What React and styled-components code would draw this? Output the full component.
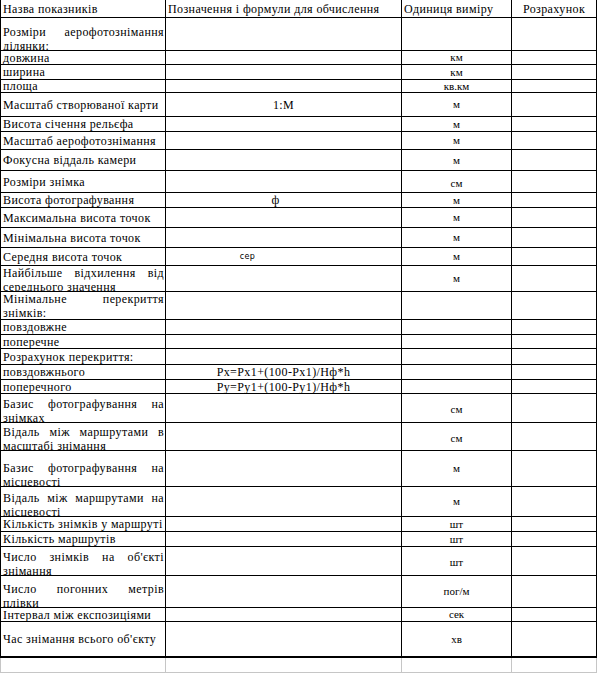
import React from 'react';
import styled, { createGlobalStyle } from 'styled-components';

const GlobalStyle = createGlobalStyle`
  html, body {
    margin: 0;
    padding: 0;
    background: #fff;
  }
  body {
    font-family: "Liberation Serif", "Times New Roman", serif;
    color: #000;
  }
`;

const Sheet = styled.div`
  width: 597px;
  display: flex;
  flex-direction: column;
`;

const Row = styled.div`
  display: grid;
  grid-template-columns: 166px 236px 110px 85px;
  box-sizing: border-box;
  height: ${p => p.$h}px;
  border-bottom: ${p => (p.$thick ? 2 : 1)}px solid ${p => (p.$grey ? '#c6c6c6' : '#000')};
`;

const Cell = styled.div`
  box-sizing: border-box;
  display: flex;
  flex-direction: column;
  justify-content: ${p => p.$valign || 'center'};
  overflow: hidden;
  white-space: nowrap;
  border-right: 1px solid ${p => (p.$grey ? '#c6c6c6' : '#000')};
  &:first-child {
    border-left: 1px solid ${p => (p.$grey ? '#c6c6c6' : '#000')};
  }
`;

const Name = styled(Cell)`
  padding: 0 1px 0 2px;
  font-size: 12px;
  line-height: 14px;
  letter-spacing: 0.4px;
`;

// two-line cells sit on the bottom border, as the sheet clips their last line
const Wrapped = styled.div`
  margin-bottom: ${p => (p.$top ? 0 : -3)}px;
`;

const Line = styled.div`
  text-align: ${p => (p.$justify ? 'justify' : 'left')};
  text-align-last: ${p => (p.$justify ? 'justify' : 'left')};
`;

const Formula = styled(Cell)`
  font-size: 12px;
  line-height: 14px;
  letter-spacing: 0.4px;
  text-align: center;
  padding-right: ${p => p.$shift || 0}px;
`;

const Sub = styled.span`
  font-family: "DejaVu Sans", sans-serif;
  font-size: 8px;
  letter-spacing: 0.3px;
`;

const Unit = styled(Cell)`
  font-size: 11px;
  line-height: 13px;
  text-align: center;
  padding-top: ${p => (p.$low ? 3 : 0)}px;
`;

const Head = styled(Cell)`
  font-size: 12px;
  line-height: 14px;
  letter-spacing: 0.4px;
  padding-left: ${p => (p.$center ? 0 : 2)}px;
  text-align: ${p => (p.$center ? 'center' : 'left')};
`;

const rows = [
  { h: 33, name: ['Розміри аерофотознімання', 'ділянки:'] },
  { h: 14, name: 'довжина', unit: 'км' },
  { h: 15, name: 'ширина', unit: 'км' },
  { h: 13, name: 'площа', unit: 'кв.км' },
  { h: 24, name: 'Масштаб створюваної карти', formula: '1:М', unit: 'м' },
  { h: 15, name: 'Висота січення рельєфа', unit: 'м' },
  { h: 18, name: 'Масштаб аерофотознімання', unit: 'м' },
  { h: 21, name: 'Фокусна віддаль камери', unit: 'м' },
  { h: 22, name: 'Розміри знімка', unit: 'см', low: true },
  { h: 15, name: 'Висота фотографування', formula: 'ф', shift: 16, unit: 'м' },
  { h: 20, name: 'Максимальна висота точок', unit: 'м' },
  { h: 20, name: 'Мінімальна висота точок', unit: 'м' },
  { h: 18, name: 'Середня висота точок', sub: 'сер', unit: 'м' },
  { h: 26, name: ['Найбільше відхилення від', 'середнього значення'], unit: 'м', top: true },
  { h: 28, name: ['Мінімальне перекриття', 'знімків:'], top: true },
  { h: 15, name: 'повздовжне' },
  { h: 14, name: 'поперечне' },
  { h: 16, name: 'Розрахунок перекриття:' },
  { h: 15, name: 'повздовжнього', formula: 'Px=Px1+(100-Px1)/Hф*h' },
  { h: 14, name: 'поперечного', formula: 'Py=Py1+(100-Py1)/Hф*h' },
  { h: 29, name: ['Базис фотографування на', 'знімках'], unit: 'см', low: true },
  { h: 28, name: ['Відаль між маршрутами в', 'масштабі знімання'], unit: 'см', low: true },
  { h: 36, name: ['Базис фотографування на', 'місцевості'], unit: 'м' },
  { h: 30, name: ['Відаль між маршрутами на', 'місцевості'], unit: 'м' },
  { h: 15, name: 'Кількість знімків у маршруті', unit: 'шт' },
  { h: 15, name: 'Кількість маршрутів', unit: 'шт' },
  { h: 29, name: ["Число знімків на об'єкті", 'знімання'], unit: 'шт', low: true },
  { h: 32, name: ['Число погонних метрів', 'плівки'], unit: 'пог/м' },
  { h: 14, name: 'Інтервал між експозиціями', unit: 'сек' },
  { h: 36, name: "Час знімання всього об'єкту", unit: 'хв', thick: true },
];

const NameCell = ({ name, top }) => {
  if (Array.isArray(name)) {
    return (
      <Name $valign={top ? 'flex-start' : 'flex-end'}>
        <Wrapped $top={top}>
          <Line $justify>{name[0]}</Line>
          <Line>{name[1]}</Line>
        </Wrapped>
      </Name>
    );
  }
  return <Name>{name}</Name>;
};

export default function App() {
  return (
    <>
      <GlobalStyle />
      <Sheet>
        <Row $h={18}>
          <Head>Назва показників</Head>
          <Head>Позначення і формули для обчислення</Head>
          <Head>Одиниця виміру</Head>
          <Head $center>Розрахунок</Head>
        </Row>
        {rows.map((r, i) => (
          <Row key={i} $h={r.h} $thick={r.thick}>
            <NameCell name={r.name} top={r.top} />
            <Formula $shift={r.sub ? 72 : r.shift}>
              {r.sub ? <Sub>{r.sub}</Sub> : r.formula || ''}
            </Formula>
            <Unit $low={r.low}>{r.unit || ''}</Unit>
            <Cell />
          </Row>
        ))}
        <Row $h={15} $grey>
          <Cell $grey />
          <Cell $grey />
          <Cell $grey />
          <Cell $grey />
        </Row>
      </Sheet>
    </>
  );
}
